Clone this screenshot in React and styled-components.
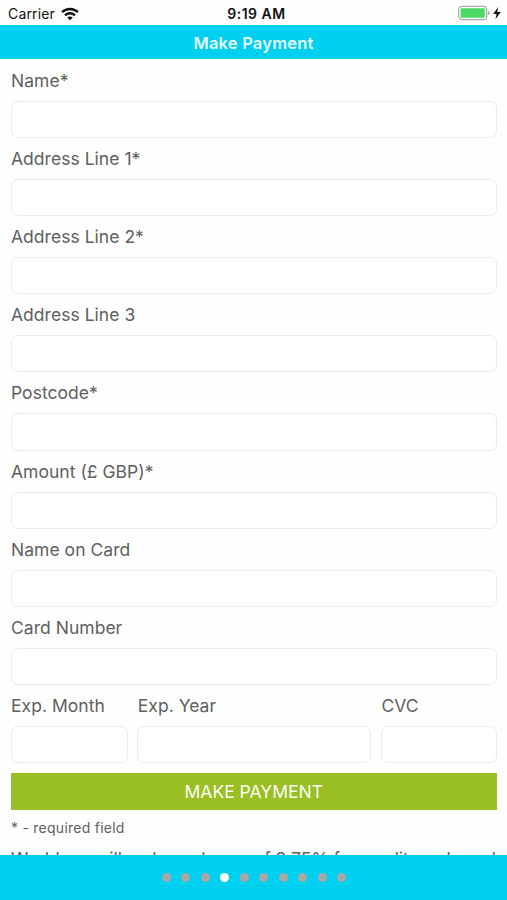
import styled, { createGlobalStyle } from "styled-components";

const GlobalStyle = createGlobalStyle`
  * {
    box-sizing: border-box;
  }

  body {
    margin: 0;
    background: #fefefe;
    font-family: "Inter", "Liberation Sans", sans-serif;
    color: #606060;
  }
`;

const Screen = styled.div`
  display: flex;
  flex-direction: column;
  height: 900px;
  overflow: hidden;
`;

const StatusBar = styled.div`
  flex: none;
  display: grid;
  grid-template-columns: 1fr auto 1fr;
  align-items: center;
  height: 25px;
  padding: 3px 5px 0 8px;
  color: #111;
  font-size: 14px;
  line-height: 20px;
`;

const Carrier = styled.div`
  display: flex;
  align-items: center;
  gap: 6.5px;
  letter-spacing: 0.15px;

  svg {
    margin-top: -1px;
  }
`;

const Time = styled.span`
  margin-left: 3px;
  font-size: 14px;
  font-weight: 600;
  letter-spacing: 0.5px;
`;

const Power = styled.div`
  display: flex;
  align-items: center;
  justify-content: flex-end;
  margin-top: -2px;
`;

const Header = styled.header`
  flex: none;
  height: 34px;
  background: #00d0f0;
  color: #e4fbff;
  font-size: 16.5px;
  font-weight: 600;
  letter-spacing: 0.2px;
  line-height: 36px;
  text-align: center;
`;

const Form = styled.form`
  flex: 1;
  min-height: 0;
  overflow: hidden;
  padding: 0.7px 10px 0 10.5px;
`;

const Field = styled.label`
  display: block;
  height: 78.2px;
`;

const Label = styled.span`
  display: block;
  height: 41px;
  padding-left: 0.5px;
  font-size: 17.5px;
  letter-spacing: 0.03px;
  line-height: 42px;
  white-space: nowrap;
`;

const Input = styled.input`
  display: block;
  width: 100%;
  height: 37.2px;
  padding: 0 10px;
  border: 1px solid #ececec;
  border-radius: 7px;
  background: #fff;
  font: inherit;
  outline: none;
`;

const CardRow = styled.div`
  display: grid;
  grid-template-columns: 117px 234px 116px;
  justify-content: space-between;
`;

const PayButton = styled.button`
  display: block;
  width: 100%;
  height: 37px;
  margin-top: 9.3px;
  padding: 0;
  border: 0;
  background: #99bf25;
  color: #fbfdf3;
  font-family: inherit;
  font-size: 17.5px;
  line-height: 37px;
`;

const Hint = styled.p`
  margin: 8.5px 0 0 0.5px;
  font-size: 14px;
  letter-spacing: 0.25px;
  line-height: 20px;
`;

const Notice = styled.p`
  margin: 9px -20px 0 0.5px;
  font-size: 17.5px;
  letter-spacing: 0.01px;
  line-height: 24px;
  white-space: nowrap;
`;

const Pager = styled.nav`
  flex: none;
  display: flex;
  justify-content: center;
  gap: 10.5px;
  height: 45.5px;
  padding: 18.5px 0 0 1px;
  background: #00d0f0;
`;

const Dot = styled.span`
  width: 9px;
  height: 9px;
  border-radius: 50%;
  background: ${(props) => (props.$active ? "#fff" : "#a8a8a8")};
`;

const fields = [
  "Name*",
  "Address Line 1*",
  "Address Line 2*",
  "Address Line 3",
  "Postcode*",
  "Amount (£ GBP)*",
  "Name on Card",
  "Card Number",
];

const cardFields = ["Exp. Month", "Exp. Year", "CVC"];

function WifiIcon() {
  return (
    <svg width="18" height="14" viewBox="0 0 17 13" fill="none" stroke="#111" strokeWidth="2.2">
      <path d="M1 4.8C5.2 0.8 11.8 0.8 16 4.8" />
      <path d="M3.8 7.7C6.5 5.2 10.5 5.2 13.2 7.7" />
      <path d="M5.9 9.8C7.4 8.5 9.6 8.5 11.1 9.8L8.5 12.5Z" fill="#111" stroke="none" />
    </svg>
  );
}

function BatteryIcon() {
  return (
    <svg width="45" height="16" viewBox="0 0 45 16">
      <rect x="1.7" y="1.4" width="28" height="13.2" rx="3.2" fill="#fff" stroke="#aaa" strokeWidth="1.2" />
      <rect x="3.6" y="3.3" width="24.2" height="9.4" rx="1.2" fill="#4cd964" />
      <path d="M31.2 5.7C33 6.5 33 9.5 31.2 10.3Z" fill="#999" />
      <path d="M41.2 2L36.2 9H39.6L38.5 14.2L43.8 6.9H40.2Z" fill="#111" />
    </svg>
  );
}

export default function App() {
  return (
    <Screen>
      <GlobalStyle />
      <StatusBar>
        <Carrier>
          <span>Carrier</span>
          <WifiIcon />
        </Carrier>
        <Time>9:19 AM</Time>
        <Power>
          <BatteryIcon />
        </Power>
      </StatusBar>

      <Header>Make Payment</Header>

      <Form onSubmit={(e) => e.preventDefault()}>
        {fields.map((name) => (
          <Field key={name}>
            <Label>{name}</Label>
            <Input />
          </Field>
        ))}

        <CardRow>
          {cardFields.map((name) => (
            <Field key={name}>
              <Label>{name}</Label>
              <Input />
            </Field>
          ))}
        </CardRow>

        <PayButton>MAKE PAYMENT</PayButton>
        <Hint>* - required field</Hint>
        <Notice>Worldpay will make a charge of 2.75% for credit cards and</Notice>
      </Form>

      <Pager>
        {Array.from({ length: 10 }, (_, i) => (
          <Dot key={i} $active={i === 3} />
        ))}
      </Pager>
    </Screen>
  );
}
